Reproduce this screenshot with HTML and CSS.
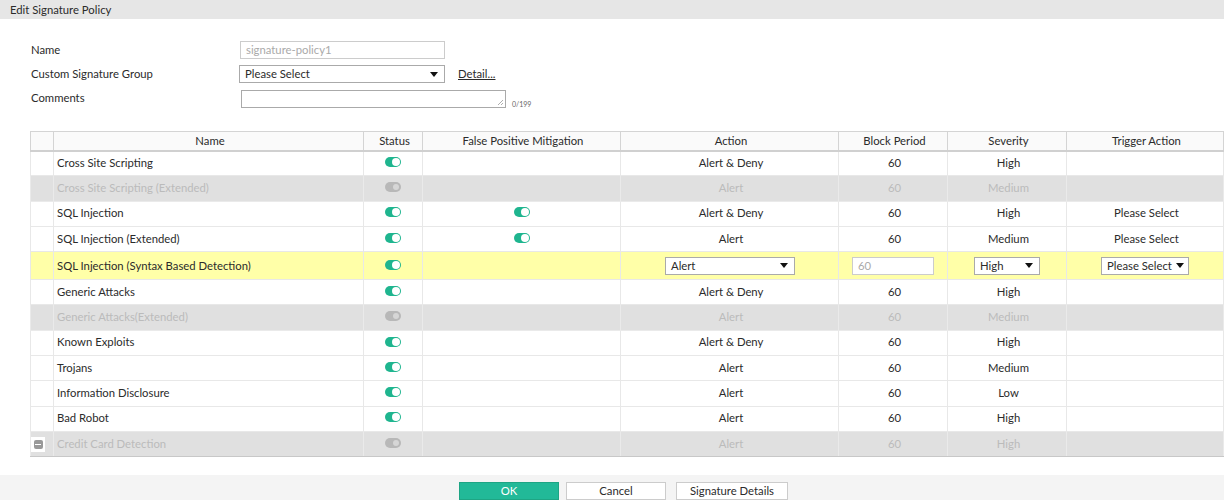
FILE: index.html
```html
<!DOCTYPE html>
<html>
<head>
<meta charset="utf-8">
<link rel="stylesheet" href="styles.css">
</head>
<body>
<div class="titlebar">Edit Signature Policy</div>
<div class="form">
  <div class="label">Name</div>
  <div class="field"><div class="input input-name">signature-policy1</div></div>
  <div class="label">Custom Signature Group</div>
  <div class="field"><div class="select select-group"><span>Please Select</span><i class="caret"></i></div><a class="detail">Detail...</a></div>
  <div class="label">Comments</div>
  <div class="field"><div class="textarea"><svg class="grip" width="7" height="7" viewBox="0 0 7 7"><path d="M6 1L1 6M6 4L4 6" stroke="#999" stroke-width="0.8"/></svg></div><span class="count">0/199</span></div>
</div>

<table class="grid">
  <colgroup>
    <col style="width:23px"><col style="width:310px"><col style="width:59px"><col style="width:198px"><col style="width:218px"><col style="width:109px"><col style="width:119px"><col>
  </colgroup>
  <thead>
    <tr><th></th><th>Name</th><th>Status</th><th>False Positive Mitigation</th><th>Action</th><th>Block Period</th><th>Severity</th><th>Trigger Action</th></tr>
  </thead>
  <tbody>
    <tr><td></td><td class="name">Cross Site Scripting</td><td class="t"><span class="tog on"></span></td><td></td><td>Alert &amp; Deny</td><td>60</td><td>High</td><td></td></tr>
    <tr class="off"><td></td><td class="name">Cross Site Scripting (Extended)</td><td class="t"><span class="tog"></span></td><td></td><td>Alert</td><td>60</td><td>Medium</td><td></td></tr>
    <tr><td></td><td class="name">SQL Injection</td><td class="t"><span class="tog on"></span></td><td class="t"><span class="tog on"></span></td><td>Alert &amp; Deny</td><td>60</td><td>High</td><td>Please Select</td></tr>
    <tr><td></td><td class="name">SQL Injection (Extended)</td><td class="t"><span class="tog on"></span></td><td class="t"><span class="tog on"></span></td><td>Alert</td><td>60</td><td>Medium</td><td>Please Select</td></tr>
    <tr class="edit"><td></td><td class="name">SQL Injection (Syntax Based Detection)</td><td class="t"><span class="tog on"></span></td><td></td>
      <td><div class="select sel-action"><span>Alert</span><i class="caret"></i></div></td>
      <td><div class="input sel-period">60</div></td>
      <td><div class="select sel-sev"><span>High</span><i class="caret"></i></div></td>
      <td><div class="select sel-trig"><span>Please Select</span><i class="caret"></i></div></td></tr>
    <tr><td></td><td class="name">Generic Attacks</td><td class="t"><span class="tog on"></span></td><td></td><td>Alert &amp; Deny</td><td>60</td><td>High</td><td></td></tr>
    <tr class="off"><td></td><td class="name">Generic Attacks(Extended)</td><td class="t"><span class="tog"></span></td><td></td><td>Alert</td><td>60</td><td>Medium</td><td></td></tr>
    <tr><td></td><td class="name">Known Exploits</td><td class="t"><span class="tog on"></span></td><td></td><td>Alert &amp; Deny</td><td>60</td><td>High</td><td></td></tr>
    <tr><td></td><td class="name">Trojans</td><td class="t"><span class="tog on"></span></td><td></td><td>Alert</td><td>60</td><td>Medium</td><td></td></tr>
    <tr><td></td><td class="name">Information Disclosure</td><td class="t"><span class="tog on"></span></td><td></td><td>Alert</td><td>60</td><td>Low</td><td></td></tr>
    <tr><td></td><td class="name">Bad Robot</td><td class="t"><span class="tog on"></span></td><td></td><td>Alert</td><td>60</td><td>High</td><td></td></tr>
    <tr class="off"><td class="exp"><span class="minus"></span></td><td class="name">Credit Card Detection</td><td class="t"><span class="tog"></span></td><td></td><td>Alert</td><td>60</td><td>High</td><td></td></tr>
  </tbody>
</table>

<div class="footer">
  <button class="btn ok">OK</button>
  <button class="btn">Cancel</button>
  <button class="btn wide">Signature Details</button>
</div>
</body>
</html>
```

FILE: styles.css
```css
* { box-sizing: border-box; }
html, body { margin: 0; padding: 0; background: #fff; }
body {
  font-family: Lato, "Open Sans", "Liberation Sans", sans-serif;
  font-size: 11.3px;
  color: #2b2b2b;
  height: 500px;
  overflow: hidden;
}
.titlebar {
  height: 19px;
  line-height: 19px;
  background: #e6e6e6;
  padding-left: 10px;
}
.form {
  display: grid;
  grid-template-columns: 209px auto;
  grid-auto-rows: 24px;
  padding: 22px 0 0 31px;
  height: 112px;
}
.label { line-height: 18px; }
.field { display: flex; align-items: flex-start; }
.input {
  height: 18px;
  border: 1px solid #ccc;
  padding: 0 5px;
  line-height: 16px;
  color: #aaa;
  background: #fff;
}
.input-name { width: 205px; }
.select {
  height: 18px;
  border: 1px solid #aaa;
  background: #fff;
  padding: 0 5px;
  display: flex;
  align-items: center;
  justify-content: space-between;
  line-height: 16px;
  text-align: left;
}
.select-group { width: 206px; margin-left: -1px; }
.caret {
  width: 0; height: 0;
  border-left: 4px solid transparent;
  border-right: 4px solid transparent;
  border-top: 5px solid #111;
  margin-right: 1px;
}
.detail {
  margin-left: 13px;
  text-decoration: underline;
  line-height: 18px;
}
.textarea {
  position: relative;
  width: 265px;
  height: 18px;
  margin-left: 1px;
  margin-top: 1px;
  border: 1px solid #aaa;
  background: #fff;
}
.grip { position: absolute; right: 1px; bottom: 1px; }
.count { font-size: 7px; color: #666; margin-left: 6px; margin-top: 11px; }

.grid {
  margin-left: 30px;
  width: 1194px;
  border-collapse: collapse;
  table-layout: fixed;
  border: 1px solid #c8c8c8;
  border-right: none;
}
.grid th {
  height: 19px;
  font-weight: normal;
  background: #fafafa;
  border: 1px solid #d4d4d4;
  border-bottom: 2px solid #d0d0d0;
  padding: 0 0 0 3px;
  text-align: center;
}
.grid td {
  height: 25.3px;
  padding: 0 0 2px 3px;
  text-align: center;
  border: 1px solid #e8e8e8;
  border-top: none;
  vertical-align: middle;
}
.grid td.t { padding-left: 0; }
.grid td.name { text-align: left; padding-left: 3px; }
.grid tr.off td { background: #e0e0e0; color: #bbb; border-color: #eaeaea; }
.grid tr.edit td { background: #ffffa8; height: 28px; padding-bottom: 0; }
.grid tbody tr:last-child td { border-bottom: 1px solid #c8c8c8; }

.tog {
  display: inline-block;
  position: relative;
  width: 16px;
  height: 10px;
  border-radius: 5px;
  background: #b8b8b8;
  vertical-align: middle;
  top: -2px;
}
.tog::after {
  content: "";
  position: absolute;
  top: 2px;
  right: 2px;
  width: 6px;
  height: 6px;
  border-radius: 50%;
  background: #d6d6d6;
}
.tog.on { background: #1fb58f; }
.tog.on::after { background: #fff; top: 1px; right: 1px; width: 8px; height: 8px; }

.sel-action { width: 130px; margin-left: 41px; }
.sel-period { width: 82px; margin-left: 10px; text-align: left; color: #aaa; }
.sel-sev { width: 66px; margin-left: 23px; }
.sel-trig { width: 88px; margin-left: 31px; padding-right: 3px; }

.grid td.exp { padding: 0; }
.minus {
  display: inline-flex;
  align-items: center;
  justify-content: center;
  width: 14px;
  height: 15px;
  background: #fff;
  vertical-align: middle;
  margin-left: -8px;
  position: relative;
}
.minus::before {
  content: "";
  width: 9px;
  height: 9px;
  border-radius: 2px;
  background: #999;
}
.minus::after {
  content: "";
  position: absolute;
  left: 4px;
  top: 7px;
  width: 6px;
  height: 1.5px;
  background: #fff;
}

.footer {
  margin-top: 18px;
  background: #f4f4f4;
  height: 25px;
  display: flex;
  justify-content: center;
  align-items: flex-start;
  padding: 7px 0 0 23px;
  gap: 7px;
}
.btn {
  font-family: inherit;
  font-size: 11.3px;
  color: #2b2b2b;
  background: #fff;
  border: 1px solid #ccc;
  width: 100px;
  height: 18px;
  padding: 0;
  line-height: 16px;
}
.btn.ok { background: #22b998; border-color: #1ea584; color: #fff; }
.btn.wide { width: 112px; margin-left: 3px; }
```
